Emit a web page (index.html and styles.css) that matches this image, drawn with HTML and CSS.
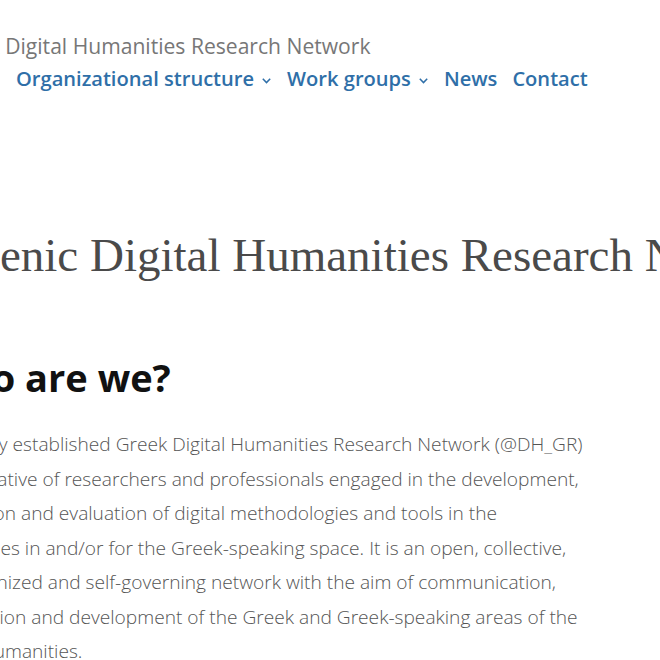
FILE: index.html
```html
<!DOCTYPE html>
<html lang="en">
<head>
<meta charset="utf-8">
<title>Hellenic Digital Humanities Research Network</title>
<link rel="stylesheet" href="styles.css">
</head>
<body>
<div class="page">
  <header class="site-header">
    <div class="site-title">Greek Digital Humanities Research Network</div>
    <nav class="main-nav">
      <a class="nav-item" href="#">Organizational structure<span class="caret"><svg width="9" height="6" viewBox="0 0 9 6"><path d="M0.8 0.8 L4.5 4.6 L8.2 0.8" fill="none" stroke="currentColor" stroke-width="1.5"/></svg></span></a>
      <a class="nav-item" href="#">Work groups<span class="caret"><svg width="9" height="6" viewBox="0 0 9 6"><path d="M0.8 0.8 L4.5 4.6 L8.2 0.8" fill="none" stroke="currentColor" stroke-width="1.5"/></svg></span></a>
      <a class="nav-item" href="#">News</a>
      <a class="nav-item" href="#">Contact</a>
    </nav>
  </header>
  <main class="content">
    <h1 class="page-title">Hellenic Digital Humanities Research Network</h1>
    <h2 class="section-title">Who are we?</h2>
    <p class="intro">The newly established Greek Digital Humanities Research Network (@DH_GR) is an initiative of researchers and professionals engaged in the development, application and evaluation of digital methodologies and tools in the Humanities in and/or for the Greek-speaking space. It is an open, collective, self-organized and self-governing network with the aim of communication, cooperation and development of the Greek and Greek-speaking areas of the Digital Humanities.</p>
  </main>
</div>
</body>
</html>
```
FILE: styles.css
```css
html, body {
  margin: 0;
  padding: 0;
  background: #fff;
  overflow: hidden;
}
body {
  font-family: "Open Sans", "Liberation Sans", sans-serif;
}
.page {
  margin-left: -76px;
  width: 668px;
}
.site-header {
  padding-top: 30px;
}
.site-title {
  font-size: 21.1px;
  color: #777;
  line-height: 32px;
  padding-left: 17px;
  white-space: nowrap;
}
.main-nav {
  display: flex;
  gap: 15px;
  padding-left: 92px;
  margin-top: 1px;
}
.nav-item {
  display: inline-flex;
  align-items: center;
  font-size: 20.1px;
  font-weight: 600;
  color: #2f6fa8;
  text-decoration: none;
  line-height: 32px;
  white-space: nowrap;
}
.caret {
  display: inline-flex;
  margin-left: 8px;
  margin-right: 1px;
  padding-top: 4px;
}
.content {
  padding-top: 130px;
}
.page-title {
  font-family: "Liberation Serif", "Times New Roman", serif;
  font-weight: 400;
  font-size: 47px;
  color: #4a4a4a;
  margin: 0 0 0 -5px;
  white-space: nowrap;
  line-height: 60px;
}
.section-title {
  font-size: 38px;
  font-weight: 700;
  color: #111;
  margin: 62px 0 0 6px;
  line-height: 60px;
}
.intro {
  font-size: 19.15px;
  font-weight: 300;
  color: #555;
  line-height: 34.5px;
  margin: 20px 0 0 -2px;
}
```
